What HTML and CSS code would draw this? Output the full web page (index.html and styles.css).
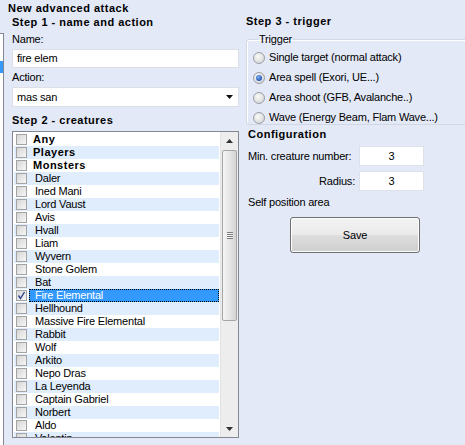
FILE: index.html
```html
<!DOCTYPE html>
<html lang="en">
<head>
<meta charset="utf-8">
<title>New advanced attack</title>
<link rel="stylesheet" href="styles.css">
</head>
<body>
<div class="window">
  <div class="title">New advanced attack</div>
  <div class="main">
    <div class="side-strip"><div class="side-sel"></div></div>

    <section class="col-left">
      <div class="heading">Step 1 - name and action</div>
      <div class="field-label label-name">Name:</div>
      <div class="textbox">fire elem</div>
      <div class="field-label label-action">Action:</div>
      <div class="combo">
        <span>mas san</span>
        <svg class="combo-arrow" width="7" height="4" viewBox="0 0 7 4"><path d="M0 0H7L3.5 4Z" fill="#111"/></svg>
      </div>
      <div class="heading heading-list">Step 2 - creatures</div>

      <div class="listbox">
        <ul class="items">
          <li class="row"><span class="check"></span><span class="name bold">Any</span></li>
          <li class="row alt"><span class="check"></span><span class="name bold">Players</span></li>
          <li class="row"><span class="check"></span><span class="name bold">Monsters</span></li>
          <li class="row alt"><span class="check"></span><span class="name">Daler</span></li>
          <li class="row"><span class="check"></span><span class="name">Ined Mani</span></li>
          <li class="row alt"><span class="check"></span><span class="name">Lord Vaust</span></li>
          <li class="row"><span class="check"></span><span class="name">Avis</span></li>
          <li class="row alt"><span class="check"></span><span class="name">Hvall</span></li>
          <li class="row"><span class="check"></span><span class="name">Liam</span></li>
          <li class="row alt"><span class="check"></span><span class="name">Wyvern</span></li>
          <li class="row"><span class="check"></span><span class="name">Stone Golem</span></li>
          <li class="row alt"><span class="check"></span><span class="name">Bat</span></li>
          <li class="row selected"><span class="check checked"><svg width="9" height="9" viewBox="0 0 9 9"><path d="M1.5 4.5L3.5 7.5L7.5 1" fill="none" stroke="#2a3f8f" stroke-width="1.4"/></svg></span><span class="name">Fire Elemental</span></li>
          <li class="row alt"><span class="check"></span><span class="name">Hellhound</span></li>
          <li class="row"><span class="check"></span><span class="name">Massive Fire Elemental</span></li>
          <li class="row alt"><span class="check"></span><span class="name">Rabbit</span></li>
          <li class="row"><span class="check"></span><span class="name">Wolf</span></li>
          <li class="row alt"><span class="check"></span><span class="name">Arkito</span></li>
          <li class="row"><span class="check"></span><span class="name">Nepo Dras</span></li>
          <li class="row alt"><span class="check"></span><span class="name">La Leyenda</span></li>
          <li class="row"><span class="check"></span><span class="name">Captain Gabriel</span></li>
          <li class="row alt"><span class="check"></span><span class="name">Norbert</span></li>
          <li class="row"><span class="check"></span><span class="name">Aldo</span></li>
          <li class="row alt"><span class="check"></span><span class="name">Valentin</span></li>
        </ul>
        <div class="vscroll">
          <div class="sb-btn"><svg width="7" height="4" viewBox="0 0 7 4"><path d="M3.5 0L7 4H0Z" fill="#333"/></svg></div>
          <div class="sb-track">
            <div class="sb-thumb"><span class="grip"></span></div>
          </div>
          <div class="sb-btn"><svg width="7" height="4" viewBox="0 0 7 4"><path d="M0 0H7L3.5 4Z" fill="#333"/></svg></div>
        </div>
      </div>
    </section>

    <section class="col-right">
      <div class="heading">Step 3 - trigger</div>
      <fieldset class="group">
        <legend>Trigger</legend>
        <div class="radio-row"><span class="radio"></span><span>Single target (normal attack)</span></div>
        <div class="radio-row"><span class="radio on"></span><span>Area spell (Exori, UE...)</span></div>
        <div class="radio-row"><span class="radio"></span><span>Area shoot (GFB, Avalanche..)</span></div>
        <div class="radio-row"><span class="radio"></span><span>Wave (Energy Beam, Flam Wave...)</span></div>
      </fieldset>

      <div class="heading heading-config">Configuration</div>
      <div class="config">
        <span class="cfg-label cfg-first">Min. creature number:</span>
        <div class="numbox">3</div>
        <span class="cfg-label">Radius:</span>
        <div class="numbox">3</div>
      </div>
      <div class="note">Self position area</div>
      <button class="save" type="button">Save</button>
    </section>
  </div>
</div>
</body>
</html>
```

FILE: styles.css
```css
html, body {
  margin: 0;
  padding: 0;
}

body {
  width: 465px;
  height: 445px;
  overflow: hidden;
  background: #e3e9f7;
  font-family: "Liberation Sans", Arial, sans-serif;
  font-size: 11px;
  line-height: 13px;
  letter-spacing: -0.2px;
  color: #000;
}

.window {
  height: 445px;
}

.title,
.heading,
.name.bold {
  font-weight: bold;
  letter-spacing: 0.5px;
}

.title {
  padding: 2px 0 0 8px;
}

.main {
  display: flex;
  align-items: flex-start;
  margin-top: 1px;
}

/* neighbouring panel peeking in from the left edge */
.side-strip {
  width: 3px;
  height: 420px;
  margin-top: 17px;
  background: #fff;
  border-top: 1px solid #828790;
  border-right: 1px solid #828790;
  display: flex;
  flex-direction: column;
}

.side-sel {
  margin-top: 27px;
  height: 12px;
  background: #3399ff;
}

/* ---------- left column ---------- */
.col-left {
  width: 227px;
  margin-left: 8px;
  display: flex;
  flex-direction: column;
}

.label-name {
  margin-top: 4px;
}

.label-action {
  margin-top: 3px;
}

.textbox,
.combo {
  box-sizing: border-box;
  height: 19px;
  margin-top: 3px;
  padding: 0 4px;
  background: #fff;
  border: 1px solid #dcdfe6;
  display: flex;
  align-items: center;
}

.combo {
  height: 20px;
  justify-content: space-between;
  padding-right: 5px;
}

.heading-list {
  margin-top: 7px;
}

.listbox {
  box-sizing: border-box;
  height: 307px;
  width: 227px;
  margin-top: 4px;
  background: #fff;
  border: 1px solid #828790;
  display: flex;
}

.items {
  list-style: none;
  margin: 0;
  padding: 1px;
  width: 206px;
  overflow: hidden;
}

.row {
  height: 13px;
  display: flex;
  align-items: center;
}

.row.alt {
  background: #dfedfc;
}

.check {
  box-sizing: border-box;
  width: 11px;
  height: 11px;
  margin-left: 2px;
  border: 1px solid #a3a3a3;
  background: linear-gradient(135deg, #d6d6d6, #f7f7f7);
  display: flex;
  align-items: center;
  justify-content: center;
  flex: none;
}

.name {
  margin-left: 6px;
  padding-left: 2px;
  height: 13px;
}

.name.bold {
  padding-left: 0;
}

.row.selected .name {
  box-sizing: border-box;
  flex: 1;
  margin-left: 2px;
  padding-left: 5px;
  background: #3399ff;
  color: #fff;
  border: 1px dotted #000;
  line-height: 11px;
}

/* vertical scrollbar */
.vscroll {
  width: 17px;
  display: flex;
  flex-direction: column;
  background: #ededed;
  border-left: 1px solid #e2e2e2;
}

.sb-btn {
  height: 17px;
  display: flex;
  align-items: center;
  justify-content: center;
  flex: none;
}

.sb-track {
  flex: 1;
  display: flex;
  flex-direction: column;
}

.sb-thumb {
  box-sizing: border-box;
  height: 171px;
  margin: 1px 1px 0 1px;
  border: 1px solid #a5a5a5;
  border-radius: 2px;
  background: linear-gradient(90deg, #f5f5f5, #e4e4e4 55%, #d3d3d3);
  display: flex;
  align-items: center;
  justify-content: center;
}

.grip {
  width: 6px;
  height: 7px;
  background: repeating-linear-gradient(180deg, #7d7d7d 0 1px, #f2f2f2 1px 2px);
}

/* ---------- right column ---------- */
.col-right {
  flex: 1;
  margin-left: 7px;
  margin-top: -1px;
  display: flex;
  flex-direction: column;
  align-items: flex-start;
}

.group {
  align-self: stretch;
  margin: 5px -10px 0 0;
  padding: 5px 0 0 6px;
  border: 1px solid #d2d8e2;
  border-radius: 3px;
  box-shadow: inset 1px 1px 0 #fff;
  display: flex;
  flex-direction: column;
  gap: 7px;
}

.group legend {
  padding: 0 1px;
  margin-left: 5px;
  line-height: 13px;
}

.radio-row {
  height: 13px;
  display: flex;
  align-items: center;
  gap: 4px;
}

.radio {
  box-sizing: border-box;
  width: 12px;
  height: 12px;
  border-radius: 50%;
  border: 1px solid #9aa0a8;
  background: radial-gradient(circle at 40% 35%, #fafafa, #dcdcdc 70%, #c8c8c8);
  display: flex;
  align-items: center;
  justify-content: center;
}

.radio.on::after {
  content: "";
  width: 6px;
  height: 6px;
  border-radius: 50%;
  background: radial-gradient(circle at 40% 35%, #7fb2f0, #1f4fb0 75%);
}

.heading-config {
  margin-top: 3px;
  margin-left: 2px;
}

.config {
  display: grid;
  grid-template-columns: 107px 65px;
  column-gap: 4px;
  row-gap: 5px;
  align-items: center;
  margin-top: 5px;
  margin-left: 2px;
}

.cfg-label {
  text-align: right;
  white-space: nowrap;
}

.cfg-first {
  text-align: left;
}

.numbox {
  box-sizing: border-box;
  height: 20px;
  background: #fff;
  border: 1px solid #dde1e8;
  display: flex;
  align-items: center;
  justify-content: center;
}

.note {
  margin-top: 5px;
  margin-left: 2px;
}

.save {
  box-sizing: border-box;
  width: 130px;
  height: 36px;
  margin: 8px 0 0 44px;
  padding: 0;
  font: inherit;
  letter-spacing: inherit;
  color: #000;
  border: 1px solid #707070;
  border-radius: 3px;
  background: linear-gradient(180deg, #f3f3f3 0%, #ebebeb 48%, #dddddd 52%, #cfcfcf 100%);
  box-shadow: inset 0 0 0 1px #fcfcfc;
}
```
